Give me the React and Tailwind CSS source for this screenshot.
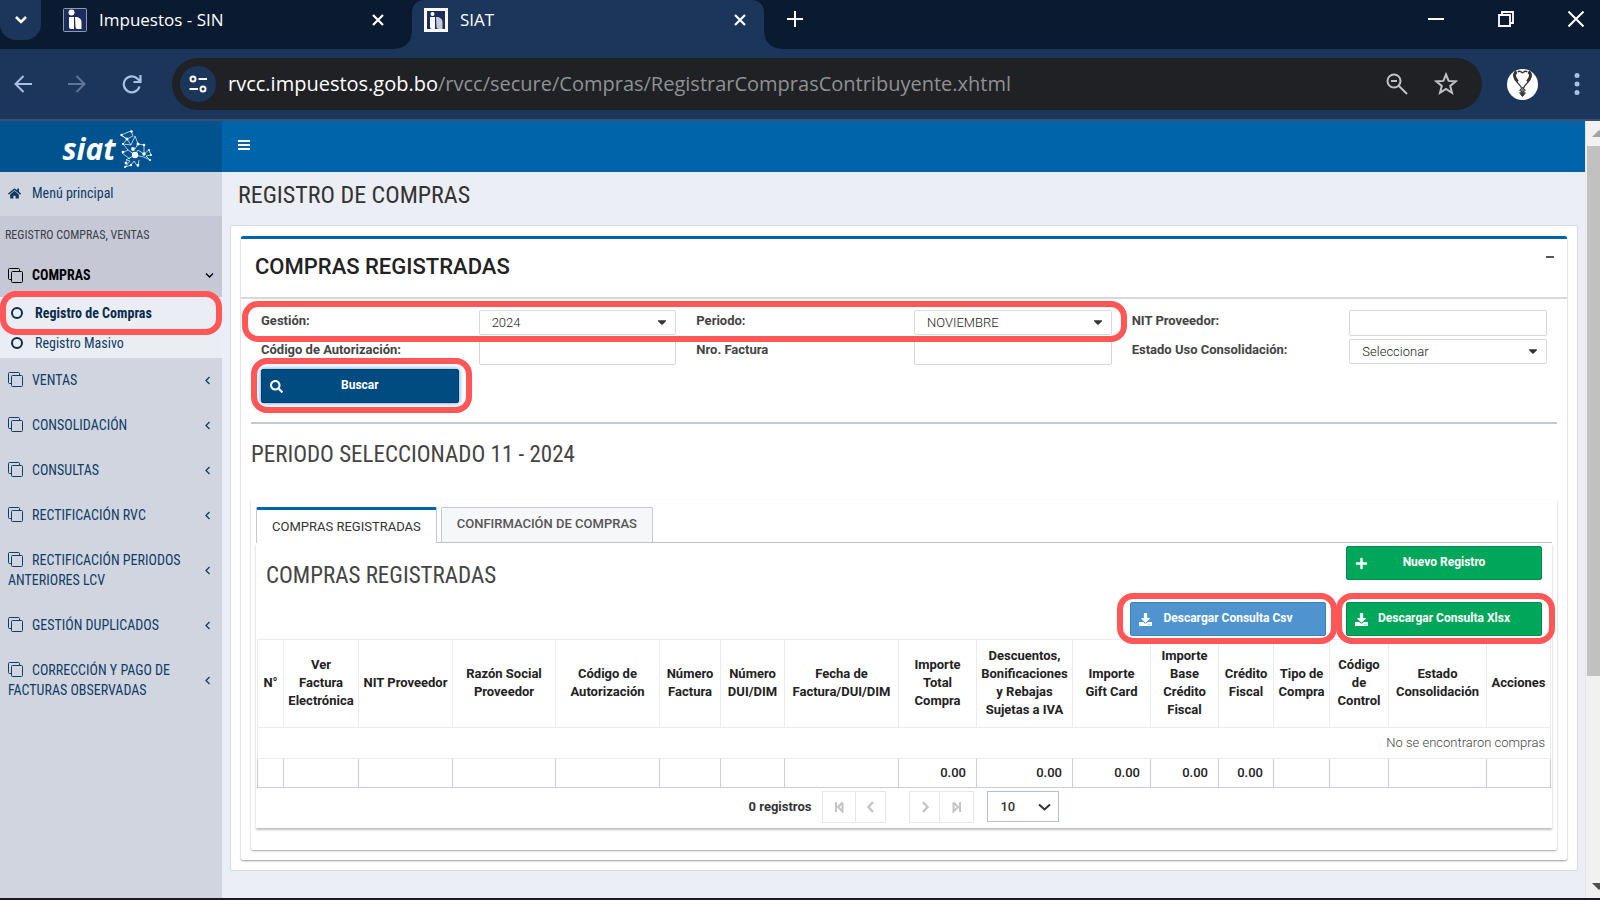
import React, { useState } from "react";
import { FaHome, FaSearch, FaPlus, FaDownload, FaCaretDown } from "react-icons/fa";

const menuItems = [
  "VENTAS",
  "CONSOLIDACIÓN",
  "CONSULTAS",
  "RECTIFICACIÓN RVC",
  "RECTIFICACIÓN PERIODOS ANTERIORES LCV",
  "GESTIÓN DUPLICADOS",
  "CORRECCIÓN Y PAGO DE FACTURAS OBSERVADAS",
];

const columns = [
  { title: "N°", col: "w-[26px]" },
  { title: "Ver\nFactura Electrónica", col: "w-[75px]" },
  { title: "NIT Proveedor", col: "w-[94px]" },
  { title: "Razón Social Proveedor", col: "w-[103px]" },
  { title: "Código de Autorización", col: "w-[104px]" },
  { title: "Número Factura", col: "w-[61px]" },
  { title: "Número DUI/DIM", col: "w-[64px]" },
  { title: "Fecha de Factura/DUI/DIM", col: "w-[114px]" },
  { title: "Importe Total Compra", col: "w-[78px]", total: "0.00" },
  { title: "Descuentos, Bonificaciones y Rebajas Sujetas a IVA", col: "w-[96px]", total: "0.00" },
  { title: "Importe\nGift Card", col: "w-[78px]", total: "0.00" },
  { title: "Importe Base Crédito Fiscal", col: "w-[68px]", total: "0.00" },
  { title: "Crédito Fiscal", col: "w-[55px]", total: "0.00" },
  { title: "Tipo de Compra", col: "w-[56px]" },
  { title: "Código de Control", col: "w-[59px]" },
  { title: "Estado Consolidación", col: "w-[98px]" },
  { title: "Acciones", col: "w-[64px]" },
];

const condensed = "font-['Roboto_Condensed','Liberation_Sans_Narrow',sans-serif]";

function Icon({ d, className, width = 2, box = "0 0 24 24" }) {
  return (
    <svg viewBox={box} className={className} fill="none" stroke="currentColor" strokeWidth={width}>
      <path d={d} />
    </svg>
  );
}

function Favicon({ light }) {
  return (
    <svg viewBox="0 0 24 24" className="size-6 shrink-0">
      <rect width="24" height="24" rx={light ? 0 : 2} fill={light ? "#fff" : "#8f9bb5"} />
      <rect
        x={light ? 3 : 1}
        y={light ? 3 : 1}
        width={light ? 18 : 22}
        height={light ? 18 : 22}
        fill="#1c2c5c"
      />
      <circle cx="8.500" cy={light ? 6 : 4.500} r={light ? 2 : 3} fill="#fff" />
      <path d="M6 9h5v12H8a2 2 0 0 1-2-2z" fill="#fff" />
      <path d="M12 9c4 0 6.500 2 6.500 5v7h-4a2 2 0 0 1-2-2z" fill={light ? "#c3cadb" : "#fff"} />
    </svg>
  );
}

function CloneIcon() {
  return (
    <svg viewBox="0 0 15 15" className="mr-[9px] inline-block size-[15px] align-[-2px]" fill="none" stroke="currentColor">
      <rect x="3.500" y="3.500" width="11" height="11" rx="1" />
      <path d="M3.500 11.500h-2a1 1 0 0 1-1-1v-9a1 1 0 0 1 1-1h9a1 1 0 0 1 1 1v2" />
    </svg>
  );
}

function Ring({ className }) {
  return (
    <span
      className={`pointer-events-none absolute z-10 rounded-2xl border-6 border-[#ff5757] ${className}`}
    />
  );
}

function BrowserBar() {
  return (
    <header className="font-['Open_Sans','Noto_Sans',sans-serif] text-white">
      <div className="flex h-[49px] bg-[#0a1a31]">
        <button aria-label="Buscar pestañas" className="flex h-10 w-[41px] items-center justify-center rounded-b-2xl bg-[#1b355b]">
          <Icon d="M2 4l5 5 5-5" box="0 0 14 14" width={2.5} className="size-[14px]" />
        </button>
        <div className="flex h-[39px] w-[371px] items-center pl-[22px]">
          <Favicon />
          <span className="ml-3 flex-1 text-[17px]">Impuestos - SIN</span>
          <button aria-label="Cerrar pestaña" className="mr-[28px]">
            <Icon d="M1 1l10 10M11 1L1 11" box="0 0 12 12" width={2.2} className="size-3" />
          </button>
        </div>
        <div className="relative w-[352px] rounded-t-xl bg-[#1b355b]">
          <span className="absolute bottom-0 -left-4 size-4 bg-[radial-gradient(circle_at_0_0,#0a1a31_15px,#1b355b_16px)]" />
          <span className="absolute -right-4 bottom-0 size-4 bg-[radial-gradient(circle_at_100%_0,#0a1a31_15px,#1b355b_16px)]" />
          <div className="flex h-[39px] items-center pl-3">
            <Favicon light />
            <span className="ml-3 flex-1 text-[17px]">SIAT</span>
            <button aria-label="Cerrar pestaña" className="mr-[18px]">
              <Icon d="M1 1l10 10M11 1L1 11" box="0 0 12 12" width={2.2} className="size-3" />
            </button>
          </div>
        </div>
        <div className="flex h-[38px] flex-1 items-center pr-4 pl-[23px]">
          <button aria-label="Nueva pestaña">
            <Icon d="M8 0v16M0 8h16" box="0 0 16 16" className="size-4" />
          </button>
          <div className="ml-auto flex gap-[54px]">
            <button aria-label="Minimizar">
              <Icon d="M0 8h16" box="0 0 16 16" className="size-4" />
            </button>
            <button aria-label="Restaurar">
              <Icon d="M1 4h11v11H1zM4 4V1h11v11h-3" box="0 0 16 16" width={1.8} className="size-4" />
            </button>
            <button aria-label="Cerrar">
              <Icon d="M0.500 0.500l15 15M15.500 0.500l-15 15" box="0 0 16 16" className="size-4" />
            </button>
          </div>
        </div>
      </div>

      <div className="flex h-[72px] items-center border-b-2 border-[#3b4f70] bg-[#1b355b] pr-5 pl-[14px] text-[#a9c0e6]">
        <button aria-label="Atrás">
          <Icon d="M18 9H1.500M9.500 1L1.500 9l8 8" box="0 0 18 18" className="size-[18px]" />
        </button>
        <button aria-label="Adelante" className="ml-9 text-[#5f7699]">
          <Icon d="M0 9h16.500M8.500 1l8 8-8 8" box="0 0 18 18" className="size-[18px]" />
        </button>
        <button aria-label="Recargar" className="ml-9">
          <Icon d="M17.500 12.500A8 8 0 1 1 15.800 5L18 7.200M18.500 1v7h-7" box="0 0 20 20" width={2.2} className="size-5" />
        </button>
        <div className="ml-[30px] flex h-[52px] flex-1 items-center rounded-full bg-[#202124] pr-6 pl-2">
          <button aria-label="Información del sitio" className="flex size-9 items-center justify-center rounded-full bg-[#1b355b] text-white">
            <svg viewBox="0 0 18 18" className="size-[18px]" fill="none" stroke="currentColor" strokeWidth="2">
              <circle cx="4" cy="4" r="2.500" />
              <circle cx="14" cy="14" r="2.500" />
              <path d="M9.500 4H18M0.500 14H9" />
            </svg>
          </button>
          <span className="ml-3 flex-1 text-[20px] text-[#8f9195]">
            <span className="text-white">rvcc.impuestos.gob.bo</span>
            /rvcc/secure/Compras/RegistrarComprasContribuyente.xhtml
          </span>
          <button aria-label="Zoom" className="mr-[26px] text-[#c0c2c5]">
            <Icon d="M8 1.500a6.500 6.500 0 1 0 0 13a6.500 6.500 0 1 0 0-13M5 8h6M12.700 12.700L21 21" box="0 0 22 22" className="size-[22px]" />
          </button>
          <button aria-label="Favorito" className="text-[#c0c2c5]">
            <Icon
              d="M12 2.500l2.600 6.400 7 .5-5.400 4.500 1.800 6.900-6-3.800-6 3.800 1.800-6.900L2.400 9.400l7-.5z"
              className="size-6"
            />
          </button>
        </div>
        <button aria-label="Perfil" className="ml-[25px]">
          <svg viewBox="0 0 32 32" className="size-[31px]" fill="none" stroke="#333">
            <circle cx="16" cy="16" r="16" fill="#fff" stroke="none" />
            <path d="M10 3c-4 2-2 7 1 10M22 3c4 2 2 7-1 10" strokeWidth="3" />
            <path d="M11 3c3-2 4 1 5 1s2-3 5-1M10 12c0 3 4 4 5 8M22 12c0 3-4 4-5 8" strokeWidth="1.400" />
            <path d="M16 19l3 3-3 2-3-2z" fill="#777" />
            <path d="M13 24.500h6l-3 4z" fill="#333" />
          </svg>
        </button>
        <button aria-label="Menú" className="ml-9">
          <svg viewBox="0 0 6 24" className="h-6 w-[6px]" fill="currentColor">
            <circle cx="3" cy="3.500" r="2.500" />
            <circle cx="3" cy="12" r="2.500" />
            <circle cx="3" cy="20.500" r="2.500" />
          </svg>
        </button>
      </div>
    </header>
  );
}

function Logo() {
  return (
    <a href="#inicio" className="flex h-[51px] items-center justify-center bg-[#00538f] pt-1 pr-2 text-white">
      <span className="font-['Open_Sans',sans-serif] text-[30px] leading-8 font-bold italic">siat</span>
      <svg viewBox="0 0 32 38" className="ml-1 h-[38px] w-8" stroke="#fff" strokeWidth="0.700" fill="none">
        <path d="M1 5l10-4 2 5-6 3zM1 5l6 4-4 5 5 6-6 3 8 6M7 9l4 6 4-9 3 8M18 14l-3 5M8 20l7 5 3-5 6 4 5-4 2 5-5 1 4 4-6-3-9-2M15 25l-9 5 4 1-5 6 6-2 3-4 4 6 1-7M11 15l-8-1M18 14l6 1 0 9" />
        <g fill="#fff" stroke="none">
          <circle cx="15" cy="25" r="3.200" />
          <circle cx="13" cy="19" r="1.900" />
          <circle cx="1.500" cy="5" r="1.200" />
          <circle cx="11.500" cy="1.500" r="1.300" />
          <circle cx="7" cy="9" r="1.500" />
          <circle cx="18" cy="14" r="1.500" />
          <circle cx="3" cy="14" r="1.100" />
          <circle cx="3" cy="22" r="1.300" />
          <circle cx="24" cy="15" r="1.300" />
          <circle cx="24" cy="24" r="1.700" />
          <circle cx="29" cy="20" r="1.100" />
          <circle cx="31" cy="25" r="1" />
          <circle cx="30" cy="30" r="1.100" />
          <circle cx="6" cy="33" r="1.400" />
          <circle cx="11" cy="35" r="1.200" />
          <circle cx="18" cy="35" r="1.300" />
          <circle cx="5" cy="37" r="1" />
        </g>
      </svg>
    </a>
  );
}

function Sidebar() {
  return (
    <aside className={`w-[222px] shrink-0 bg-[#d1d5df] text-[14px] leading-5 text-[#0f3d66] ${condensed}`}>
      <Logo />
      <nav>
        <a href="#menu" className="flex h-11 items-center pb-[2px] pl-2">
          <FaHome className="mr-[11px] size-[13px] text-[#123a5e]" />
          Menú principal
        </a>
        <div className="bg-[#c6c9d5]">
          <p className="pt-[9px] pb-2 pl-[5px] text-[12px] text-[#3a3f4a]">REGISTRO COMPRAS, VENTAS</p>
          <button className="flex h-11 w-full items-center pr-2 pl-2 font-bold text-black">
            <CloneIcon />
            COMPRAS
            <Icon d="M1 2.500l3.500 3.500L8 2.500" box="0 0 9 9" width={1.3} className="ml-auto size-[9px]" />
          </button>
        </div>
        <ul className="relative bg-[#eaedf3] pb-[1px]">
          <li>
            <a href="#registro" className="flex h-[31px] items-center pl-[11px] font-bold text-[#0a2c4d]">
              <span className="mr-3 size-3 rounded-full border-2" />
              Registro de Compras
            </a>
          </li>
          <li>
            <a href="#masivo" className="flex h-[29px] items-center pl-[11px]">
              <span className="mr-3 size-3 rounded-full border-2 text-[#0a2c4d]" />
              Registro Masivo
            </a>
          </li>
          <Ring className="-top-[6px] right-0 left-0 h-11" />
        </ul>
        {menuItems.map((item) => (
          <button key={item} className="flex w-full items-center pt-3 pr-[10px] pb-[13px] pl-2 text-left">
            <span className="w-[180px]">
              <CloneIcon />
              {item}
            </span>
            <Icon d="M6.500 1L3 4.500 6.500 8" box="0 0 9 9" width={1.3} className="ml-auto size-[9px]" />
          </button>
        ))}
      </nav>
    </aside>
  );
}

function TextField({ id, label }) {
  return (
    <>
      <label htmlFor={id} className="px-[10px] pt-[1px] leading-5 font-bold text-[#444]">{label}</label>
      <div className="px-[10px]">
        <input id={id} type="text" className="block h-[26px] w-full rounded-xs border border-[#d2d6de] bg-white px-3" />
      </div>
    </>
  );
}

function SelectField({ id, label, value }) {
  return (
    <>
      <label htmlFor={id} className="px-[10px] pt-[1px] leading-5 font-bold text-[#444]">{label}</label>
      <div className="relative px-[10px]">
        <select
          id={id}
          className="block h-[25px] w-full appearance-none rounded-xs border border-[#d8dbe4] bg-white px-3 font-light text-[#222]"
        >
          <option>{value}</option>
        </select>
        <FaCaretDown className="pointer-events-none absolute top-[5px] right-[17px] size-[14px] text-[#333]" />
      </div>
    </>
  );
}

function ActionButton({ icon, children, color }) {
  return (
    <button className={`relative block h-[34px] w-full rounded-xs border pb-[3px] text-center text-[12px] font-bold text-white ${color}`}>
      <span className="absolute top-[10px] left-2 text-[13px]">{icon}</span>
      {children}
    </button>
  );
}

function PurchasesTable() {
  return (
    <table className="w-full table-fixed border-collapse text-[#222]">
      <colgroup>
        {columns.map((c) => (
          <col key={c.title} className={c.col} />
        ))}
      </colgroup>
      <thead>
        <tr className="h-[88px]">
          {columns.map((c) => (
            <th key={c.title} className="border border-[#ececec] px-0 pt-0 pb-[2px] leading-[18px] font-bold whitespace-pre-line">
              {c.title}
            </th>
          ))}
        </tr>
      </thead>
      <tbody>
        <tr className="h-[31px]">
          <td colSpan={17} className="border border-[#ececec] pr-[5px] text-right font-light text-[#444]">
            No se encontraron compras
          </td>
        </tr>
      </tbody>
      <tfoot>
        <tr className="h-[29px]">
          {columns.map((c) => (
            <td key={c.title} className="border border-[#c9cdd6] py-0 pr-[10px] text-right font-medium">
              {c.total}
            </td>
          ))}
        </tr>
      </tfoot>
    </table>
  );
}

function Paginator() {
  const btn = "flex h-8 items-center justify-center border border-[#e6e6ec] text-[#c4c4c4]";
  return (
    <div className="flex h-10 items-center justify-center pb-[3px] text-[#333]">
      <span className="mr-[11px] font-bold">0 registros</span>
      <button aria-label="Primera página" className={`${btn} w-[34px]`}>
        <Icon d="M3 1v10M9.500 1.500L5 6l4.500 4.500V1.500" box="0 0 12 12" className="size-3" />
      </button>
      <button aria-label="Página anterior" className={`${btn} w-[30px] border-l-0`}>
        <Icon d="M8 1L3.500 6 8 11" box="0 0 12 12" width={2.4} className="size-3" />
      </button>
      <button aria-label="Página siguiente" className={`${btn} ml-[23px] w-[31px]`}>
        <Icon d="M4 1l4.500 5L4 11" box="0 0 12 12" width={2.4} className="size-3" />
      </button>
      <button aria-label="Última página" className={`${btn} w-[34px] border-l-0`}>
        <Icon d="M9 1v10M2.500 1.500L7 6l-4.500 4.500V1.500" box="0 0 12 12" className="size-3" />
      </button>
      <div className="relative ml-[13px]">
        <select aria-label="Registros por página" className="h-[31px] w-[72px] appearance-none border border-[#b9c0cd] bg-white pl-3 font-medium">
          <option>10</option>
        </select>
        <Icon d="M1 3.500l5.500 5 5.500-5" box="0 0 13 12" className="pointer-events-none absolute top-[10px] right-2 h-3 w-[13px]" />
      </div>
    </div>
  );
}

export default function App() {
  const [tab, setTab] = useState(0);

  return (
    <div className="flex min-h-screen flex-col border-b-2 border-[#1d1a26] font-[Roboto,sans-serif] text-[13px]">
      <BrowserBar />
      <div className="flex flex-1">
        <Sidebar />

        <div className="min-w-0 flex-1 bg-[#ebeef4]">
          <div className="flex h-[51px] items-center bg-[#0064aa] pb-1 pl-4">
            <button aria-label="Mostrar menú" className="text-white">
              <Icon d="M0 1h12M0 5h12M0 9h12" box="0 0 12 10" className="h-[10px] w-3" />
            </button>
          </div>
          <h1 className={`h-[53px] pt-[7px] pl-4 text-[24px] leading-8 text-[#333] ${condensed}`}>REGISTRO DE COMPRAS</h1>

          {/* Page card */}
          <main className="mr-[7px] ml-2 rounded-xs border border-[#d8dce4] bg-white p-[10px]">
            <section className="rounded-xs border-t-3 border-[#0064aa] pb-[10px] shadow-[0_1px_2px_rgba(0,0,0,0.4)]">
              <div className="flex h-[60px] justify-between border-b-2 border-[#d8d8d8] pr-[13px] pl-[14px]">
                <h2 className="pt-3 text-[22px] leading-8 font-medium text-[#222]">COMPRAS REGISTRADAS</h2>
                <button aria-label="Contraer" className="mt-[17px] h-[2px] w-2 bg-[#555]" />
              </div>

              {/* Search form */}
              <form className="relative mx-[10px] border-b-2 border-[#c3cad6] pt-[11px] pb-[19px]" onSubmit={(e) => e.preventDefault()}>
                <div className="relative grid grid-cols-6 gap-y-[3px]">
                  <SelectField id="gestion" label="Gestión:" value="2024" />
                  <SelectField id="periodo" label="Periodo:" value="NOVIEMBRE" />
                  <TextField id="nit" label="NIT Proveedor:" />
                  <TextField id="codigo" label="Código de Autorización:" />
                  <TextField id="factura" label="Nro. Factura" />
                  <SelectField id="estado" label="Estado Uso Consolidación:" value="Seleccionar" />
                  <Ring className="-top-[9px] right-[430px] -left-[9px] h-[41px]" />
                </div>
                <div className="mt-1 grid grid-cols-6">
                  <div className="relative px-[10px]">
                    <ActionButton icon={<FaSearch />} color="border-[#003e6b] bg-[#004b80] shadow-[0_0_5px_#4d94d0]">
                      Buscar
                    </ActionButton>
                    <Ring className="-top-[11px] -right-[3px] left-0 h-[55px]" />
                  </div>
                </div>
              </form>

              <h2 className={`mx-[10px] mt-[15px] text-[23px] leading-8 text-[#444] ${condensed}`}>
                PERIODO SELECCIONADO 11 - 2024
              </h2>

              {/* Tabs */}
              <div className="mx-[10px] mt-[29px] rounded-xs px-[5px] pt-[7px] pb-[22px] shadow-[0_1px_2px_rgba(0,0,0,0.35)]">
                <div role="tablist" className="flex h-9 gap-1 border-b border-[#bfc1c6]">
                  <button
                    role="tab"
                    aria-selected={tab === 0}
                    onClick={() => setTab(0)}
                    className="-mb-[1px] rounded-t-xs border-x border-t-3 border-x-[#c5c8ce] border-t-[#0064aa] bg-white px-[15px] text-[#333]"
                  >
                    COMPRAS REGISTRADAS
                  </button>
                  <button
                    role="tab"
                    aria-selected={tab === 1}
                    onClick={() => setTab(1)}
                    className="rounded-t-xs border-x border-t border-[#c5c8ce] bg-[#f5f7f9] px-[15px] pb-[2px] font-medium text-[#555]"
                  >
                    CONFIRMACIÓN DE COMPRAS
                  </button>
                </div>

                <div className="pt-[3px] shadow-[0_2px_2px_rgba(0,0,0,0.25)]">
                  <div className="flex justify-between">
                    <h2 className={`pt-[14px] pl-[10px] text-[23px] leading-8 text-[#444] ${condensed}`}>
                      COMPRAS REGISTRADAS
                    </h2>
                    <div className="w-1/6 px-[10px]">
                      <ActionButton icon={<FaPlus />} color="border-[#008d4c] bg-[#00a65a]">Nuevo Registro</ActionButton>
                    </div>
                  </div>
                  <div className="mt-[10px] flex justify-end pb-[3px]">
                    <div className="relative w-1/6 px-[10px]">
                      <ActionButton icon={<FaDownload />} color="border-[#3c83c4] bg-[#4f94cf]">Descargar Consulta Csv</ActionButton>
                      <Ring className="-top-[9px] -right-[1px] -left-[3px] h-[51px]" />
                    </div>
                    <div className="relative w-1/6 px-[10px]">
                      <ActionButton icon={<FaDownload />} color="border-[#008d4c] bg-[#00a65a]">Descargar Consulta Xlsx</ActionButton>
                      <Ring className="-top-[9px] -right-[3px] left-0 h-[51px]" />
                    </div>
                  </div>
                  <div className="px-[1px]">
                    <PurchasesTable />
                    <Paginator />
                  </div>
                </div>
              </div>
            </section>
          </main>
        </div>

        {/* Scrollbar */}
        <div className="flex w-[15px] flex-col overflow-hidden border-l border-[#e4e6ea] bg-[#f1f1f1]">
          <svg viewBox="0 0 14 25" className="h-[25px] w-[14px]">
            <path d="M6 16l7-7 7 7z" fill="#a3a3a3" />
          </svg>
          <div className="ml-[1px] h-[530px] bg-[#c1c1c1]" />
          <svg viewBox="0 0 14 25" className="mt-auto h-[25px] w-[14px]">
            <path d="M6 10l7 7 7-7z" fill="#505050" />
          </svg>
        </div>
      </div>
    </div>
  );
}
